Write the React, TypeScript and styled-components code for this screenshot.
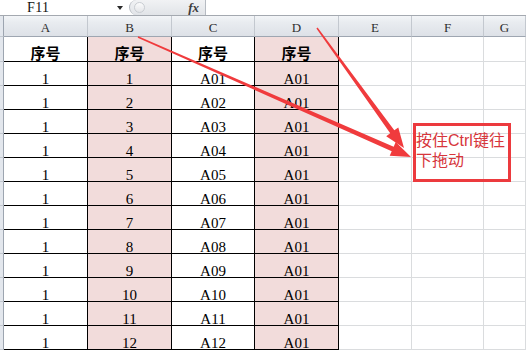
import React from "react";
import styled, { createGlobalStyle } from "styled-components";

const GlobalStyle = createGlobalStyle`
  html, body { margin: 0; padding: 0; background: #fff; overflow: hidden; }
  #root { width: 526px; height: 351px; }
`;

const Page = styled.div`
  position: relative;
  width: 526px;
  height: 351px;
  overflow: hidden;
  background: #fff;
  font-family: "Liberation Serif", "Noto Sans CJK SC", serif;
`;

const FormulaBar = styled.div`
  display: flex;
  height: 15px;
  border-bottom: 1px solid #a4a9b0;
  background: #fff;
`;

const NameBox = styled.div`
  width: 129px;
  box-sizing: border-box;
  display: flex;
  align-items: center;
  padding-left: 27px;
  font: 14px/15px "Liberation Serif", serif;
  letter-spacing: 0.4px;
  color: #111;
`;

const DropArrow = styled.span`
  margin-left: auto;
  margin-right: 6px;
  width: 0;
  height: 0;
  border-left: 3px solid transparent;
  border-right: 3px solid transparent;
  border-top: 4px solid #2a2a2a;
`;

const FxBox = styled.div`
  width: 77px;
  box-sizing: border-box;
  display: flex;
  align-items: center;
  justify-content: space-between;
  padding: 0 6px 0 4px;
  background: linear-gradient(#f1f2f4, #e1e4e8);
  border: 1px solid #b6bbc2;
  border-top: none;
  border-bottom: none;
  border-radius: 8px 0 0 8px;
`;

const Knob = styled.span`
  width: 9px;
  height: 9px;
  border-radius: 50%;
  background: linear-gradient(#fbfbfc, #e3e5e8);
  border: 1px solid #c9cdd2;
`;

const FxLabel = styled.span`
  font: italic bold 13px/15px "Liberation Serif", serif;
  color: #3c3c3c;
`;

const FormulaInput = styled.div`
  flex: 1;
  background: #fff;
`;

const Sheet = styled.div`
  display: grid;
  grid-template-columns: 4px 84px 84px 83px 84px 73px 72px 1fr;
  grid-template-rows: 21px 25px repeat(12, 24px);
`;

const RowHead = styled.div`
  box-sizing: border-box;
  background: #e3e7ed;
  border-right: 1px solid #9da5b0;
  border-bottom: 1px solid #c3c8d0;
`;

const ColHead = styled.div`
  box-sizing: border-box;
  display: flex;
  align-items: flex-end;
  justify-content: center;
  padding-bottom: 2px;
  background: linear-gradient(#f3f5f8 0%, #e9ecf0 30%, #dde1e7 100%);
  border-right: 1px solid #c3c8cf;
  border-bottom: 1px solid #9ea6b1;
  font: 13px/13px "Liberation Serif", serif;
  color: #2e2e2e;
`;

const DataCell = styled.div<{ $pink?: boolean; $head?: boolean }>`
  box-sizing: border-box;
  display: flex;
  align-items: flex-end;
  justify-content: center;
  background: ${(p) => (p.$pink ? "#f2dcdb" : "#fff")};
  border-right: 1px solid #000;
  border-bottom: 1px solid #000;
  color: #000;
  font: ${(p) =>
    p.$head
      ? `bold 15px/15px "Noto Sans CJK SC", sans-serif`
      : `15px/12px "Liberation Serif", serif`};
  padding-bottom: ${(p) => (p.$head ? "1px" : "0")};
`;

const EmptyCell = styled.div`
  box-sizing: border-box;
  border-right: 1px solid #dadcde;
  border-bottom: 1px solid #dadcde;
`;

const Overlay = styled.svg`
  position: absolute;
  left: 0;
  top: 0;
  width: 526px;
  height: 351px;
  pointer-events: none;
`;

const Callout = styled.div`
  position: absolute;
  left: 413px;
  top: 123px;
  width: 98px;
  height: 59px;
  box-sizing: border-box;
  border: 3px solid #ec3a3e;
  padding: 5px 0 0 0;
  font: 16px/20px "Liberation Sans", "Noto Sans CJK SC", sans-serif;
  color: #d7363c;
`;

const CalloutLine = styled.div`
  white-space: nowrap;
  height: 20px;
`;

const cols = ["A", "B", "C", "D", "E", "F", "G"];

function arrowPoints(
  x1: number,
  y1: number,
  x2: number,
  y2: number,
  w0: number,
  w1: number,
  headLen: number,
  headW: number
): string {
  const dx = x2 - x1;
  const dy = y2 - y1;
  const len = Math.hypot(dx, dy);
  const ux = dx / len;
  const uy = dy / len;
  const nx = -uy;
  const ny = ux;
  const bx = x2 - ux * headLen;
  const by = y2 - uy * headLen;
  const pts: [number, number][] = [
    [x1 + (nx * w0) / 2, y1 + (ny * w0) / 2],
    [bx + (nx * w1) / 2, by + (ny * w1) / 2],
    [bx + (nx * headW) / 2, by + (ny * headW) / 2],
    [x2, y2],
    [bx - (nx * headW) / 2, by - (ny * headW) / 2],
    [bx - (nx * w1) / 2, by - (ny * w1) / 2],
    [x1 - (nx * w0) / 2, y1 - (ny * w0) / 2],
  ];
  return pts.map(([x, y]) => `${x.toFixed(1)},${y.toFixed(1)}`).join(" ");
}

export default function App() {
  const rows = Array.from({ length: 12 }, (_, i) => i + 1);
  const pad = (n: number) => (n < 10 ? `0${n}` : `${n}`);
  return (
    <Page>
      <GlobalStyle />
      <FormulaBar>
        <NameBox>
          F11
          <DropArrow />
        </NameBox>
        <FxBox>
          <Knob />
          <FxLabel>fx</FxLabel>
        </FxBox>
        <FormulaInput />
      </FormulaBar>
      <Sheet>
        <RowHead />
        {cols.map((c) => (
          <ColHead key={c}>{c}</ColHead>
        ))}

        <RowHead />
        <DataCell $head>序号</DataCell>
        <DataCell $head $pink>
          序号
        </DataCell>
        <DataCell $head>序号</DataCell>
        <DataCell $head $pink>
          序号
        </DataCell>
        <EmptyCell />
        <EmptyCell />
        <EmptyCell />

        {rows.map((n) => (
          <React.Fragment key={n}>
            <RowHead />
            <DataCell>1</DataCell>
            <DataCell $pink>{n}</DataCell>
            <DataCell>A{pad(n)}</DataCell>
            <DataCell $pink>A01</DataCell>
            <EmptyCell />
            <EmptyCell />
            <EmptyCell />
          </React.Fragment>
        ))}
      </Sheet>

      <Overlay viewBox="0 0 526 351">
        <polygon
          points={arrowPoints(138, 37, 411, 157, 1.5, 5, 20, 15)}
          fill="#f03b3d"
        />
        <polygon
          points={arrowPoints(317, 28, 404, 148, 1.5, 5, 20, 15)}
          fill="#f03b3d"
        />
      </Overlay>

      <Callout>
        <CalloutLine>按住Ctrl键往</CalloutLine>
        <CalloutLine>下拖动</CalloutLine>
      </Callout>
    </Page>
  );
}
